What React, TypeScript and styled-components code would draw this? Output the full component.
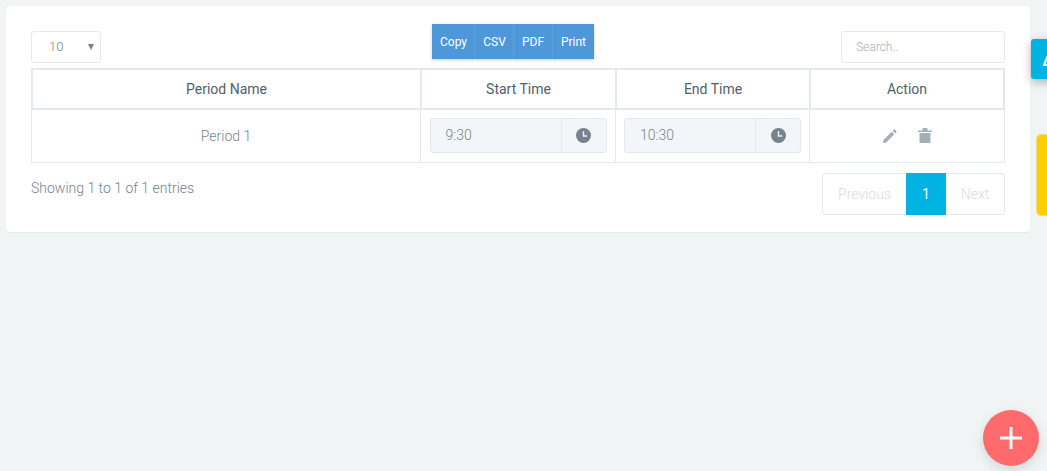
import React from "react";
import styled, { createGlobalStyle } from "styled-components";

const Global = createGlobalStyle`
  html, body { margin: 0; padding: 0; width: 1047px; height: 471px; overflow: hidden; background: #f0f4f5; }
  body { font-family: Roboto, "Liberation Sans", sans-serif; font-size: 14px; color: #76838f; }
  * { box-sizing: border-box; }
`;

const Page = styled.div`
  position: relative;
  width: 1047px;
  height: 471px;
  padding: 6px 17px 0 6px;
  overflow: hidden;
`;

const Card = styled.section`
  width: 1024px;
  height: 226px;
  background: #fff;
  border-radius: 4px;
  box-shadow: 0 1px 1px rgba(0, 0, 0, 0.05);
  padding: 18px 25px 0;
`;

const Toolbar = styled.div`
  display: flex;
  justify-content: space-between;
  align-items: flex-start;
  height: 44px;
`;

const PageSize = styled.div`
  position: relative;
  width: 70px;
  height: 32px;
  margin-top: 7px;
  border: 1px solid #e4eaec;
  border-radius: 3px;
  padding-left: 17px;
  font-size: 13px;
  font-weight: 300;
  line-height: 30px;
  color: #76838f;
`;

const Caret = styled.span`
  position: absolute;
  right: 6px;
  top: 12px;
  width: 0;
  height: 0;
  border-left: 3px solid transparent;
  border-right: 3px solid transparent;
  border-top: 6px solid #76838f;
`;

const ButtonGroup = styled.div`
  display: flex;
  height: 35px;
  margin-left: 84px;
  box-shadow: 0 1px 3px rgba(0, 0, 0, 0.2);
`;

const ExportButton = styled.button<{ $w: number }>`
  width: ${(p) => p.$w}px;
  height: 35px;
  padding: 0;
  border: 0;
  border-right: 1px solid #5f9fde;
  background: #4e97d9;
  color: #fff;
  font: 400 12px Roboto, sans-serif;
  &:last-child { border-right: 0; }
`;

const Search = styled.div`
  width: 164px;
  height: 32px;
  margin-top: 7px;
  border: 1px solid #e4eaec;
  border-radius: 3px;
  padding-left: 14px;
  font-size: 12px;
  font-weight: 300;
  line-height: 30px;
  color: #a3afb7;
`;

const Table = styled.table`
  width: 974px;
  table-layout: fixed;
  border-collapse: separate;
  border-spacing: 0;
`;

const Head = styled.th<{ $w: number }>`
  width: ${(p) => p.$w}px;
  height: 42px;
  padding: 0;
  border: 2px solid #e4eaec;
  border-right: 0;
  font-size: 14px;
  font-weight: 400;
  color: #526069;
  text-align: center;
  &:last-child { border-right: 2px solid #e4eaec; }
`;

const Cell = styled.td`
  height: 53px;
  padding: 0 0 1px;
  border-left: 1px solid #e4eaec;
  border-bottom: 1px solid #e4eaec;
  font-weight: 300;
  font-size: 14px;
  color: #76838f;
  text-align: center;
  &:last-child { border-right: 1px solid #e4eaec; }
`;

const TimeInput = styled.div`
  display: flex;
  width: 177px;
  height: 35px;
  margin: 0 auto;
  background: #f3f6f9;
  border: 1px solid #e4eaec;
  border-radius: 3px;
`;

const TimeValue = styled.span`
  flex: 1;
  padding-left: 15px;
  text-align: left;
  line-height: 33px;
  font-size: 14px;
  font-weight: 300;
  color: #76838f;
`;

const TimeAddon = styled.span`
  display: flex;
  align-items: center;
  justify-content: center;
  width: 45px;
  border-left: 1px solid #e4eaec;
`;

const Actions = styled.div`
  display: flex;
  justify-content: center;
  align-items: center;
  gap: 21px;
`;

const Footer = styled.div`
  display: flex;
  justify-content: space-between;
  align-items: flex-start;
  padding-top: 10px;
`;

const Info = styled.div`
  padding-top: 7px;
  font-size: 14px;
  font-weight: 300;
  color: #76838f;
`;

const Pager = styled.div`
  display: flex;
  height: 42px;
  border: 1px solid #e4eaec;
  border-radius: 3px;
`;

const PageLink = styled.span<{ $w: number; $active?: boolean }>`
  display: flex;
  align-items: center;
  justify-content: center;
  width: ${(p) => p.$w}px;
  margin: ${(p) => (p.$active ? "-1px 0" : "0")};
  background: ${(p) => (p.$active ? "#00b3e3" : "transparent")};
  color: ${(p) => (p.$active ? "#fff" : "#d5dde0")};
  font-size: 14px;
  font-weight: ${(p) => (p.$active ? 400 : 300)};
`;

const BlueTab = styled.div`
  position: absolute;
  left: 1031px;
  top: 39px;
  width: 30px;
  height: 40px;
  background: #00b3e3;
  border-radius: 3px;
  box-shadow: 0 3px 10px rgba(0, 0, 0, 0.28);
  overflow: hidden;
  display: flex;
  padding: 13px 0 0 12px;
`;

const YellowTab = styled.div`
  position: absolute;
  left: 1036px;
  top: 134px;
  width: 30px;
  height: 82px;
  background: #fccf00;
  border: 1px solid #f5dc7a;
  border-radius: 5px;
`;

const Fab = styled.button`
  position: absolute;
  left: 983px;
  top: 410px;
  width: 56px;
  height: 56px;
  padding: 0;
  border: 0;
  border-radius: 50%;
  background: #ff6b6d;
  box-shadow: 0 4px 12px rgba(0, 0, 0, 0.12);
  display: flex;
  align-items: center;
  justify-content: center;
`;

const Clock = () => (
  <svg width="15" height="15" viewBox="0 0 14 14">
    <circle cx="7" cy="7" r="7" fill="#76838f" />
    <path d="M7 3v4.400h3.400" fill="none" stroke="#f3f6f9" strokeWidth="1.3" />
  </svg>
);

const Pencil = () => (
  <svg width="14" height="14" viewBox="0 0 14 14">
    <path d="M0 14l.6-3.200L8.700 2.700l2.600 2.600-8.100 8.100zM9.600 1.800l1.100-1.100a1 1 0 0 1 1.400 0l1.200 1.200a1 1 0 0 1 0 1.400l-1.100 1.100z" fill="#a3afb7" />
  </svg>
);

const Trash = () => (
  <svg width="14" height="15" viewBox="0 0 14 15">
    <path d="M0 2.500h4.500V1a1 1 0 0 1 1-1h3a1 1 0 0 1 1 1v1.500H14V4H0zM1.500 5h11v9a1 1 0 0 1-1 1h-9a1 1 0 0 1-1-1z" fill="#a3afb7" />
  </svg>
);

const TimeField = ({ value }: { value: string }) => (
  <TimeInput>
    <TimeValue>{value}</TimeValue>
    <TimeAddon><Clock /></TimeAddon>
  </TimeInput>
);

export default function App() {
  return (
    <Page>
      <Global />
      <Card>
        <Toolbar>
          <PageSize>10<Caret /></PageSize>
          <ButtonGroup>
            <ExportButton $w={44}>Copy</ExportButton>
            <ExportButton $w={38}>CSV</ExportButton>
            <ExportButton $w={39}>PDF</ExportButton>
            <ExportButton $w={41}>Print</ExportButton>
          </ButtonGroup>
          <Search>Search..</Search>
        </Toolbar>
        <Table>
          <thead>
            <tr>
              <Head $w={389}>Period Name</Head>
              <Head $w={195}>Start Time</Head>
              <Head $w={194}>End Time</Head>
              <Head $w={196}>Action</Head>
            </tr>
          </thead>
          <tbody>
            <tr>
              <Cell>Period 1</Cell>
              <Cell><TimeField value="9:30" /></Cell>
              <Cell><TimeField value="10:30" /></Cell>
              <Cell>
                <Actions><Pencil /><Trash /></Actions>
              </Cell>
            </tr>
          </tbody>
        </Table>
        <Footer>
          <Info>Showing 1 to 1 of 1 entries</Info>
          <Pager>
            <PageLink $w={83}>Previous</PageLink>
            <PageLink $w={40} $active>1</PageLink>
            <PageLink $w={58}>Next</PageLink>
          </Pager>
        </Footer>
      </Card>
      <BlueTab>
        <svg width="16" height="14" viewBox="0 0 16 14">
          <path d="M1 13L6 1l6 12z" fill="none" stroke="#fff" strokeWidth="2" />
        </svg>
      </BlueTab>
      <YellowTab />
      <Fab aria-label="Add">
        <svg width="22" height="22" viewBox="0 0 22 22">
          <path d="M11 0v22M0 11h22" stroke="#fff" strokeWidth="3" />
        </svg>
      </Fab>
    </Page>
  );
}
